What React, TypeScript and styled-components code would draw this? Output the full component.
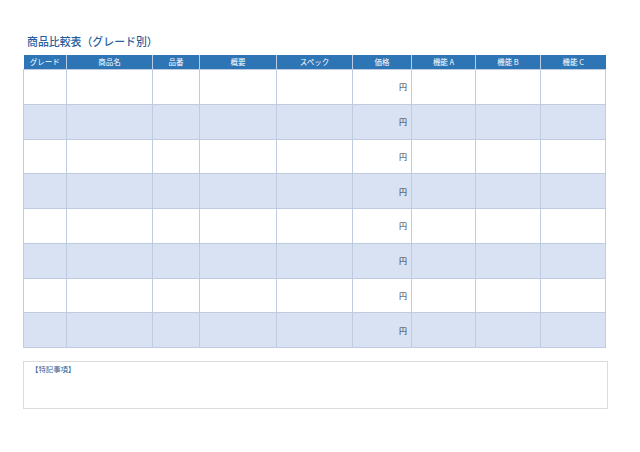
import React from "react";
import styled, { createGlobalStyle } from "styled-components";

const GlobalStyle = createGlobalStyle`
  body {
    margin: 0;
    background: #fff;
    font-family: "Noto Sans CJK JP", "Noto Sans", sans-serif;
  }
`;

const Page = styled.div`
  width: 640px;
  height: 452px;
  padding: 33px 0 0 23px;
  box-sizing: border-box;
`;

const Title = styled.h1`
  margin: 0 0 6px 4px;
  font-size: 10.9px;
  line-height: 16px;
  font-weight: 500;
  color: #2a5f9e;
`;

const Table = styled.table`
  width: 582px;
  border-collapse: collapse;
  table-layout: fixed;
`;

const HeadCell = styled.th`
  height: 14px;
  padding: 0;
  background: #2e75b6;
  color: #fff;
  font-size: 7.5px;
  line-height: 14px;
  font-weight: 400;
  text-align: center;
  border-left: 1px solid #b9cbe6;
  &:first-child {
    border-left: none;
  }
`;

const Row = styled.tr<{ $alt: boolean }>`
  height: 34.75px;
  background: ${(p) => (p.$alt ? "#d9e2f3" : "#ffffff")};
`;

const Cell = styled.td<{ $price?: boolean }>`
  padding: 0 4px 0 0;
  border: 1px solid #bfcbe0;
  font-size: 8px;
  color: #333;
  text-align: ${(p) => (p.$price ? "right" : "left")};
  vertical-align: middle;
`;

const Note = styled.div`
  margin-top: 13px;
  width: 585px;
  height: 48px;
  box-sizing: border-box;
  border: 1px solid #dcdcdc;
  padding: 1px 7px;
  font-size: 7.4px;
  line-height: 12px;
  color: #3a5f96;
`;

const columns = [
  { label: "グレード", width: 43 },
  { label: "商品名", width: 86 },
  { label: "品番", width: 47 },
  { label: "概要", width: 77 },
  { label: "スペック", width: 76 },
  { label: "価格", width: 59 },
  { label: "機能 A", width: 64 },
  { label: "機能 B", width: 65 },
  { label: "機能 C", width: 65 },
];

const rows = Array.from({ length: 8 }, (_, i) => i);

const App = () => {
  return (
    <>
      <GlobalStyle />
      <Page>
        <Title>商品比較表（グレード別）</Title>
        <Table>
          <colgroup>
            {columns.map((c) => (
              <col key={c.label} style={{ width: c.width }} />
            ))}
          </colgroup>
          <thead>
            <tr>
              {columns.map((c) => (
                <HeadCell key={c.label}>{c.label}</HeadCell>
              ))}
            </tr>
          </thead>
          <tbody>
            {rows.map((r) => (
              <Row key={r} $alt={r % 2 === 1}>
                {columns.map((c, ci) => (
                  <Cell key={c.label} $price={ci === 5}>
                    {ci === 5 ? "円" : ""}
                  </Cell>
                ))}
              </Row>
            ))}
          </tbody>
        </Table>
        <Note>【特記事項】</Note>
      </Page>
    </>
  );
};

export default App;
